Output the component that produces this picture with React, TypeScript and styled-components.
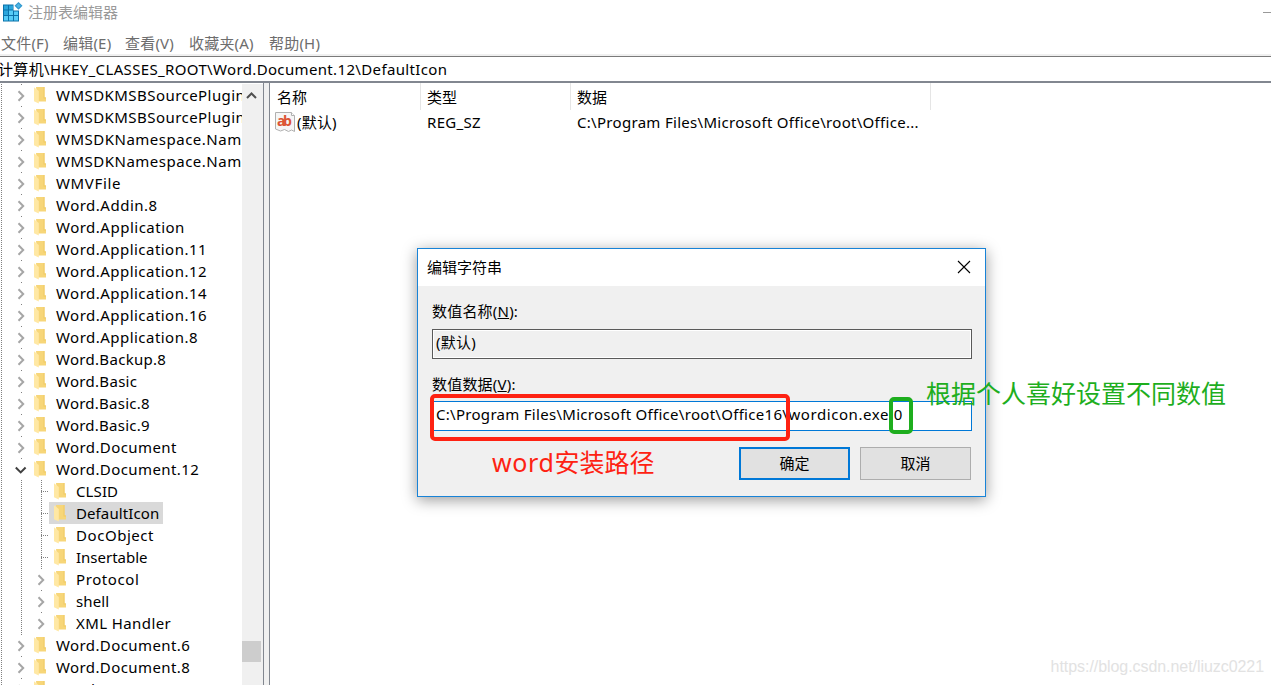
import styled, { createGlobalStyle } from 'styled-components';

type NodeState = 'closed' | 'open' | 'leaf';

type TreeNode = {
  name: string;
  level?: 1 | 2;
  state?: NodeState;
  selected?: boolean;
  spacing?: number;
};

const MENUS = [
  { label: '文件(F)', width: 62 },
  { label: '编辑(E)', width: 62 },
  { label: '查看(V)', width: 64 },
  { label: '收藏夹(A)', width: 80 },
  { label: '帮助(H)', width: 60 },
];

const NODES: TreeNode[] = [
  { name: 'WMSDKMSBSourcePluginMMS', spacing: 0.45 },
  { name: 'WMSDKMSBSourcePluginRTSP', spacing: 0.45 },
  { name: 'WMSDKNamespace.NamespaceFactory', spacing: 0.5 },
  { name: 'WMSDKNamespace.NamespaceFactory.1', spacing: 0.5 },
  { name: 'WMVFile', spacing: 0.65 },
  { name: 'Word.Addin.8', spacing: 0.5 },
  { name: 'Word.Application', spacing: 0.5 },
  { name: 'Word.Application.11' },
  { name: 'Word.Application.12' },
  { name: 'Word.Application.14' },
  { name: 'Word.Application.16' },
  { name: 'Word.Application.8' },
  { name: 'Word.Backup.8', spacing: 0.3 },
  { name: 'Word.Basic', spacing: 0.3 },
  { name: 'Word.Basic.8', spacing: 0.25 },
  { name: 'Word.Basic.9', spacing: 0.25 },
  { name: 'Word.Document', spacing: 0.4 },
  { name: 'Word.Document.12', state: 'open', spacing: 0.4 },
  { name: 'CLSID', level: 2, state: 'leaf', spacing: 0.1 },
  { name: 'DefaultIcon', level: 2, state: 'leaf', selected: true, spacing: 0.1 },
  { name: 'DocObject', level: 2, state: 'leaf', spacing: 0.55 },
  { name: 'Insertable', level: 2, state: 'leaf', spacing: 0 },
  { name: 'Protocol', level: 2, spacing: 0.6 },
  { name: 'shell', level: 2, spacing: 0.1 },
  { name: 'XML Handler', level: 2, spacing: 0.4 },
  { name: 'Word.Document.6', spacing: 0.4 },
  { name: 'Word.Document.8', spacing: 0.4 },
  { name: 'Word.DocumentMacroEnabled.12', spacing: 0.4 },
];

const RegistryIcon = () => (
  <svg width="21" height="20" viewBox="0 0 21 20">
    <path d="M1 2.500h10.500v6H17V19.500H1z" fill="#0b72aa" />
    <path d="M2 3.500h4v4H2zM7 3.500h4v4H7zM2 8.500h4v4.500H2z" fill="#2ba6dc" />
    <path d="M7 8.500h4v4.500H7zM12 9.500h4v3.500h-4zM2 14h4v4.500H2zM7 14h4v4.500H7zM12 14h4v4.500h-4z" fill="#56cdf8" />
    <path d="M16.500 0l4 3.700-4 4-4-4z" fill="#2f97ce" />
    <path d="M16.500 1.500l2.400 2.200-2.400 2.400-2.400-2.400z" fill="#4fb4e2" />
  </svg>
);

const FolderIcon = () => (
  <svg width="12" height="17" viewBox="0 0 12 17">
    <path d="M2 0h8.500v10.500H12v4H4z" fill="#f7d679" />
    <path d="M9.500 0h1v10.500H12v1H9.500z" fill="#f0ca66" />
    <path d="M0 .3l4.800 3.800V16.500L0 14.200z" fill="#ffe8a4" />
  </svg>
);

const Arrow = ({ open }: { open?: boolean }) => (
  <svg width="12" height="12" viewBox="0 0 12 12" fill="none" strokeWidth="2">
    {open
      ? <path d="M.8 3.500l4.900 4.900 4.900-4.900" stroke="#404040" />
      : <path d="M3.500 1.300l4.700 4.700-4.700 4.700" stroke="#a6a6a6" />}
  </svg>
);

const StringIcon = () => (
  <svg width="20" height="20" viewBox="0 0 20 20">
    <path d="M.5.500h16l3 3v16l-3-1.500-3 1.500-4-2-4 1.500-5-2z" fill="#f6f6f6" stroke="#b0b0b0" />
    <path d="M16.500.500v3h3" fill="#fff" stroke="#b0b0b0" />
    <text x="2" y="13.500" fontFamily="Open Sans" fontSize="14" fontWeight="700" fill="#dc5434" textLength="15">ab</text>
  </svg>
);

const App = () => (
  <Window>
    <GlobalStyle />
    <TitleBar>
      <RegistryIcon />
      <Title>注册表编辑器</Title>
      <Minimize />
    </TitleBar>
    <MenuBar>
      {MENUS.map(menu => (
        <MenuItem key={menu.label} $width={menu.width}>{menu.label}</MenuItem>
      ))}
    </MenuBar>
    <AddressBar>计算机\HKEY_CLASSES_ROOT\Word.Document.12\DefaultIcon</AddressBar>
    <Body>
      <Tree>
        {NODES.map(({ name, level = 1, state = 'closed', selected, spacing = 0.47 }) => (
          <TreeRow key={name}>
            <Guide />
            {level === 2 && <Guide />}
            <Branch $state={state}>
              {state !== 'leaf' && <Arrow open={state === 'open'} />}
            </Branch>
            <NodeLabel $selected={selected}>
              <FolderIcon />
              <NodeName $spacing={spacing}>{name}</NodeName>
            </NodeLabel>
          </TreeRow>
        ))}
      </Tree>
      <ScrollBar>
        <svg width="20" height="24" viewBox="0 0 20 24" fill="none">
          <path d="M5 14l4.500-4.500L14 14" stroke="#505050" strokeWidth="2" />
        </svg>
        <Thumb />
      </ScrollBar>
      <Splitter />
      <List>
        <HeadCell $first>名称</HeadCell>
        <HeadCell>类型</HeadCell>
        <HeadCell>数据</HeadCell>
        <NameCell><StringIcon />(默认)</NameCell>
        <Cell>REG_SZ</Cell>
        <Cell>C:\Program Files\Microsoft Office\root\Office...</Cell>
      </List>
    </Body>

    <Dialog>
      <DialogTitle>
        编辑字符串
        <svg width="14" height="14" viewBox="0 0 14 14" stroke="#000" strokeWidth="1.1">
          <path d="M1 1l12 12M13 1L1 13" />
        </svg>
      </DialogTitle>
      <DialogBody>
        <Label>数值名称(<u>N</u>):</Label>
        <Field $readOnly>(默认)</Field>
        <Label $second>数值数据(<u>V</u>):</Label>
        <Field>
          C:\Program Files\Microsoft Office\root\Office16<FileName>\wordicon.exe,0</FileName>
        </Field>
        <Actions>
          <Button $primary>确定</Button>
          <Button>取消</Button>
        </Actions>
      </DialogBody>
    </Dialog>

    <Mark $color="#fe2212" $x={430} $y={394} $w={360} $h={47} />
    <Mark $color="#1eae1e" $x={889} $y={397} $w={24} $h={37} />
    <Note $color="#fe2212" $x={492} $y={443}><Latin>word</Latin>安装路径</Note>
    <Note $color="#1eae1e" $x={926} $y={374}>根据个人喜好设置不同数值</Note>
    <Watermark>https://blog.csdn.net/liuzc0221</Watermark>
  </Window>
);

export default App;

const GlobalStyle = createGlobalStyle`
  * {
    box-sizing: border-box;
  }

  body {
    margin: 0;
    overflow: hidden;
  }

  svg {
    flex: none;
    display: block;
  }
`
const Window = styled.div`
  position: relative;
  display: flex;
  flex-direction: column;
  width: 1271px;
  height: 685px;
  overflow: hidden;
  background: #fff;
  color: #000;
  font: 15px/22px "Noto Sans", "Noto Sans CJK SC", sans-serif;
  white-space: nowrap;
`
const TitleBar = styled.div`
  display: flex;
  align-items: center;
  height: 28px;
  padding: 0 0 4px 2px;
`
const Title = styled.span`
  margin-left: 5px;
  color: #999;
`
const Minimize = styled.i`
  width: 8px;
  height: 1px;
  margin-left: auto;
  background: #999;
`
const MenuBar = styled.div`
  display: flex;
  align-items: center;
  height: 28px;
  padding: 3px 0 0 1px;
  border-bottom: 2px solid #f0f0f0;
  color: #6d6d6d;
  letter-spacing: 0.2px;
`
const MenuItem = styled.span<{ $width: number }>`
  width: ${props => props.$width}px;
`
const AddressBar = styled.div`
  height: 27px;
  padding-top: 1px;
  border-top: 1px solid #7a7a7a;
  border-bottom: 2px solid #828790;
  text-indent: -2px;
  letter-spacing: 0.35px;
`
const Body = styled.div`
  display: flex;
  flex: 1;
  min-height: 0;
`
const Tree = styled.div`
  width: 242px;
  padding-top: 1px;
  overflow: hidden;
`
const TreeRow = styled.div`
  display: flex;
  height: 22px;
`
const dots = 'repeating-linear-gradient(#808080 0 1px, transparent 1px 2px) 1px 0 / 1px 100% no-repeat'
const rowDots = 'repeating-linear-gradient(90deg, transparent 0 1px, #808080 1px 2px) 0 11px / 100% 1px no-repeat'
const singleDot = 'linear-gradient(#808080, #808080) 1px 0 / 1px 1px no-repeat'

const Guide = styled.i`
  flex: none;
  width: 20px;
  background: ${dots};
`
const Branch = styled.span<{ $state: NodeState }>`
  flex: none;
  width: 9px;
  background: ${props => props.$state === 'leaf' ? `${dots}, ${rowDots}` : singleDot};

  & > svg {
    margin: 6px 0 0 -5px;
  }
`
const NodeLabel = styled.span<{ $selected?: boolean }>`
  display: flex;
  padding: 0 4px 0 5px;
  background: ${props => props.$selected ? '#d9d9d9' : 'transparent'};

  & > svg {
    margin-top: 3px;
  }
`
const NodeName = styled.span<{ $spacing: number }>`
  margin-left: 10px;
  letter-spacing: ${props => props.$spacing}px;
`
const ScrollBar = styled.div`
  width: 21px;
  margin-top: 1px;
  background: #f0f0f0;
`
const Thumb = styled.div`
  width: 19px;
  height: 21px;
  margin-top: 533px;
  background: #cdcdcd;
`
const Splitter = styled.div`
  width: 7px;
  border: 1px solid #828790;
  border-width: 0 1px;
  background: #f0f0f0;
`
const List = styled.div`
  display: grid;
  grid-template-columns: 151px 150px 360px;
  grid-template-rows: 27px 26px;
`
const HeadCell = styled.div<{ $first?: boolean }>`
  padding: 3px 0 0 ${props => props.$first ? 7 : 6}px;
  border-right: 1px solid #e5e5e5;
`
const Cell = styled.div`
  padding: 1px 0 0 6px;
  letter-spacing: 0.3px;
`
const NameCell = styled.div`
  display: flex;
  padding: 1px 0 0 5px;
  gap: 2px;
  letter-spacing: 0.2px;

  & > svg {
    margin-top: 1px;
  }
`
const Dialog = styled.div`
  position: absolute;
  left: 417px;
  top: 248px;
  width: 569px;
  height: 249px;
  border: 1px solid #1883d7;
  background: #f0f0f0;
  box-shadow: 0 3px 14px rgba(0, 0, 0, .4);
`
const DialogTitle = styled.div`
  display: flex;
  align-items: center;
  justify-content: space-between;
  height: 37px;
  padding: 0 14px 2px 9px;
  background: #fff;
`
const DialogBody = styled.div`
  padding: 14px 13px 0 14px;
`
const Label = styled.div<{ $second?: boolean }>`
  height: ${props => props.$second ? 28 : 29}px;
  margin-top: ${props => props.$second ? 14 : 0}px;
  letter-spacing: 0.2px;
`
const Field = styled.div<{ $readOnly?: boolean }>`
  height: 30px;
  padding: 1px 3px;
  border: 1px solid ${props => props.$readOnly ? '#5a5a5a' : '#0078d7'};
  background: ${props => props.$readOnly ? '#f0f0f0' : '#fff'};
  box-shadow: inset 0 0 0 1px #fff;
  letter-spacing: 0.29px;
`
const FileName = styled.span`
  letter-spacing: 0.58px;
`
const Actions = styled.div`
  display: flex;
  justify-content: flex-end;
  gap: 10px;
  margin: 16px 1px 0 0;
`
const Button = styled.div<{ $primary?: boolean }>`
  display: flex;
  align-items: center;
  justify-content: center;
  width: 111px;
  height: 33px;
  padding-bottom: 2px;
  border: ${props => props.$primary ? '2px solid #0078d7' : '1px solid #adadad'};
  background: #e1e1e1;
`
const Mark = styled.div<{ $color: string; $x: number; $y: number; $w: number; $h: number }>`
  position: absolute;
  left: ${props => props.$x}px;
  top: ${props => props.$y}px;
  width: ${props => props.$w}px;
  height: ${props => props.$h}px;
  border: 4px solid ${props => props.$color};
  border-radius: 5px;
`
const Note = styled.div<{ $color: string; $x: number; $y: number }>`
  position: absolute;
  left: ${props => props.$x}px;
  top: ${props => props.$y}px;
  color: ${props => props.$color};
  font-size: 25px;
  line-height: 38px;
`
const Latin = styled.span`
  letter-spacing: 0.6px;
`
const Watermark = styled.div`
  position: absolute;
  right: 7px;
  bottom: 8px;
  color: #e2e2e2;
  font: 16px/20px "Liberation Sans", sans-serif;
  letter-spacing: -0.06px;
`
